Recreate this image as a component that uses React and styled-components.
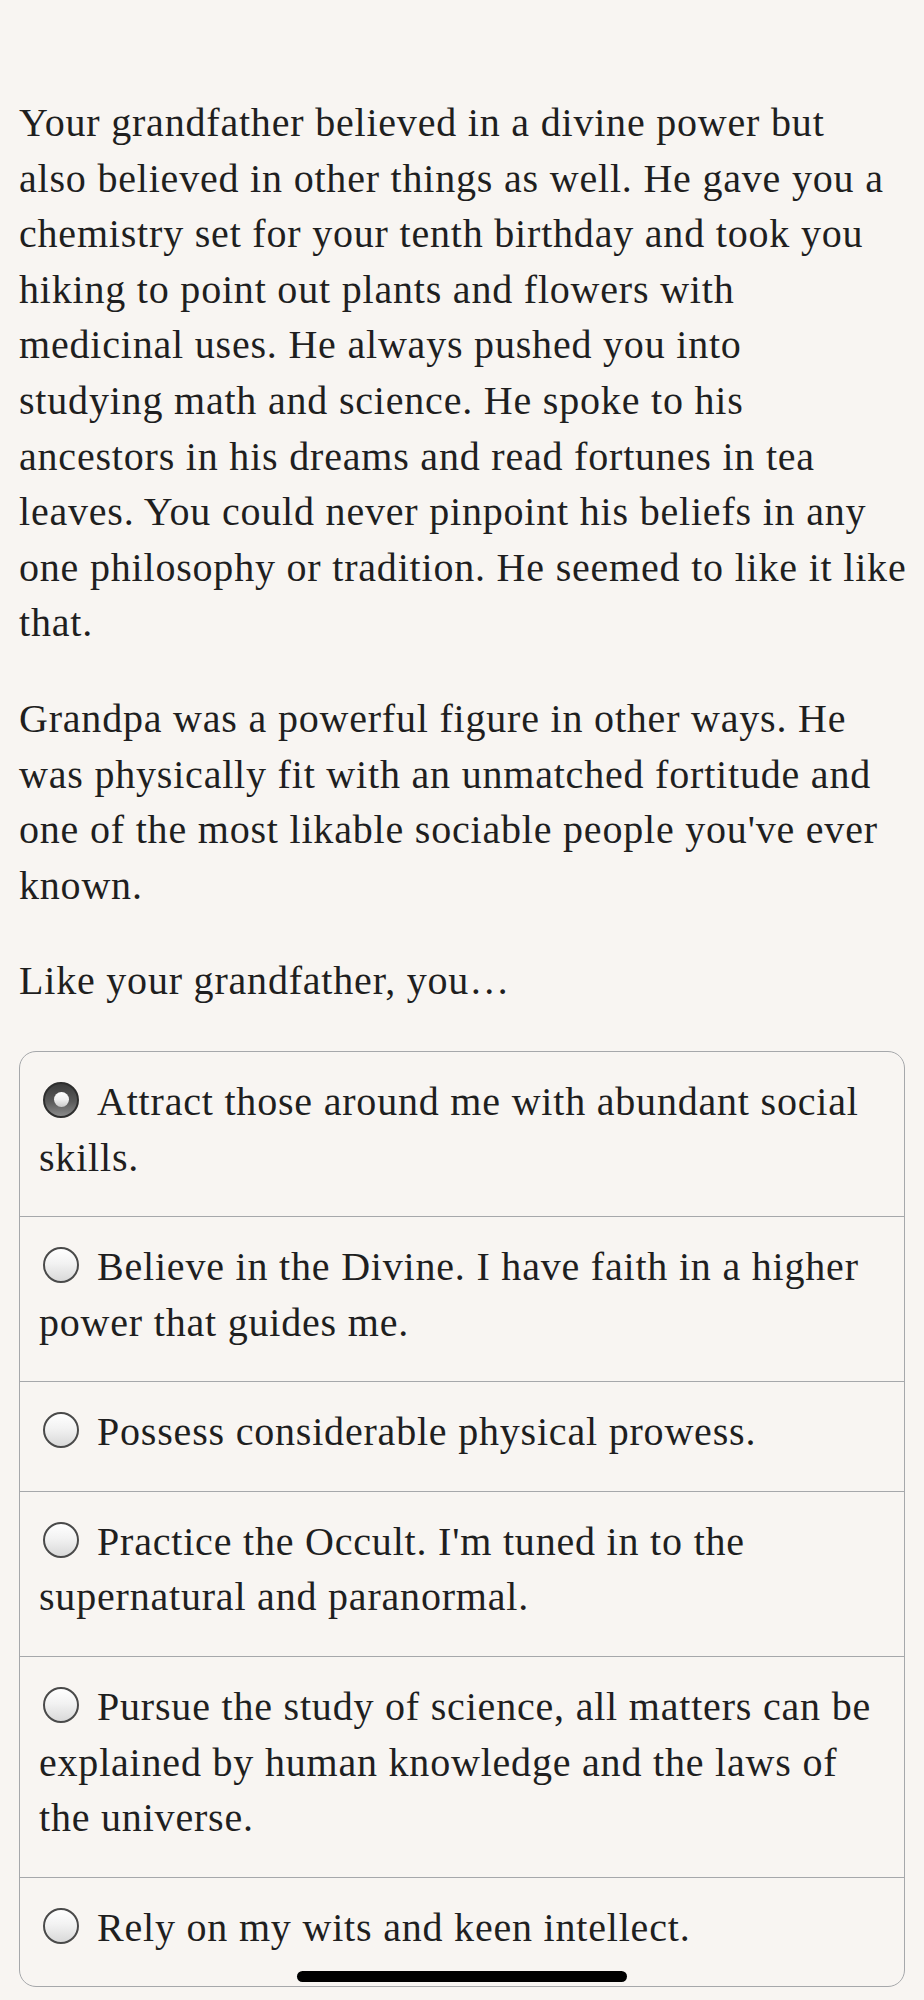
import React, { useState } from "react";
import styled, { createGlobalStyle } from "styled-components";

const GlobalStyle = createGlobalStyle`
  html, body {
    margin: 0;
    padding: 0;
    background: #f8f5f2;
  }
`;

const Page = styled.div`
  position: relative;
  min-height: 2000px;
  box-sizing: border-box;
  padding: 95px 19px 13px 19px;
  background: #f8f5f2;
  color: #1f1f1f;
  font-family: "Liberation Serif", "Times New Roman", serif;
  font-size: 40px;
  line-height: 55.6px;
  letter-spacing: 0.8px;
`;

const Para = styled.p`
  margin: 0 0 ${(p) => (p.$last ? 0 : 40)}px 0;
`;

// the story text keeps the reader app's line breaks
const Line = styled.span`
  display: block;
  white-space: nowrap;
`;

const Choices = styled.div`
  margin-top: 42px;
  border: 1.5px solid #a6a8ab;
  border-radius: 17px;
  overflow: hidden;
`;

const Choice = styled.label`
  display: block;
  padding: 22px 19px 31px 19px;
  cursor: pointer;
  & + & {
    border-top: 1.5px solid #a6a8ab;
  }
`;

const Radio = styled.span`
  display: inline-block;
  box-sizing: border-box;
  width: 36px;
  height: 36px;
  margin: 0 18px 0 4px;
  vertical-align: -3px;
  border-radius: 50%;
  position: relative;
  border: 2.5px solid ${(p) => (p.$on ? "#2e2e2e" : "#4a4a4a")};
  background: ${(p) =>
    p.$on
      ? "linear-gradient(180deg, #3c3c3c 0%, #5a5a5a 55%, #8a8a8a 100%)"
      : "linear-gradient(180deg, #ffffff 0%, #f2f2f2 45%, #d9d9d9 100%)"};

  &::after {
    content: "";
    display: ${(p) => (p.$on ? "block" : "none")};
    position: absolute;
    left: 50%;
    top: 50%;
    width: 15px;
    height: 15px;
    margin: -7.5px 0 0 -7.5px;
    border-radius: 50%;
    background: linear-gradient(180deg, #ffffff 0%, #f0f0f0 50%, #c8c8c8 100%);
  }
`;

const HomeBar = styled.div`
  position: absolute;
  left: 297px;
  bottom: 18px;
  width: 330px;
  height: 11px;
  border-radius: 6px;
  background: #000;
`;

const story = [
  [
    "Your grandfather believed in a divine power but",
    "also believed in other things as well. He gave you a",
    "chemistry set for your tenth birthday and took you",
    "hiking to point out plants and flowers with",
    "medicinal uses. He always pushed you into",
    "studying math and science. He spoke to his",
    "ancestors in his dreams and read fortunes in tea",
    "leaves. You could never pinpoint his beliefs in any",
    "one philosophy or tradition. He seemed to like it like",
    "that.",
  ],
  [
    "Grandpa was a powerful figure in other ways. He",
    "was physically fit with an unmatched fortitude and",
    "one of the most likable sociable people you've ever",
    "known.",
  ],
  ["Like your grandfather, you…"],
];

const options = [
  "Attract those around me with abundant social skills.",
  "Believe in the Divine. I have faith in a higher power that guides me.",
  "Possess considerable physical prowess.",
  "Practice the Occult. I'm tuned in to the supernatural and paranormal.",
  "Pursue the study of science, all matters can be explained by human knowledge and the laws of the universe.",
  "Rely on my wits and keen intellect.",
];

const App = () => {
  const [picked, setPicked] = useState(0);

  return (
    <>
      <GlobalStyle />
      <Page>
        {story.map((lines, i) => (
          <Para key={i} $last={i === story.length - 1}>
            {lines.map((l, j) => (
              <Line key={j}>{l}</Line>
            ))}
          </Para>
        ))}
        <Choices>
          {options.map((text, i) => (
            <Choice key={i} onClick={() => setPicked(i)}>
              <Radio $on={picked === i} />
              {text}
            </Choice>
          ))}
        </Choices>
        <HomeBar />
      </Page>
    </>
  );
};

export default App;
